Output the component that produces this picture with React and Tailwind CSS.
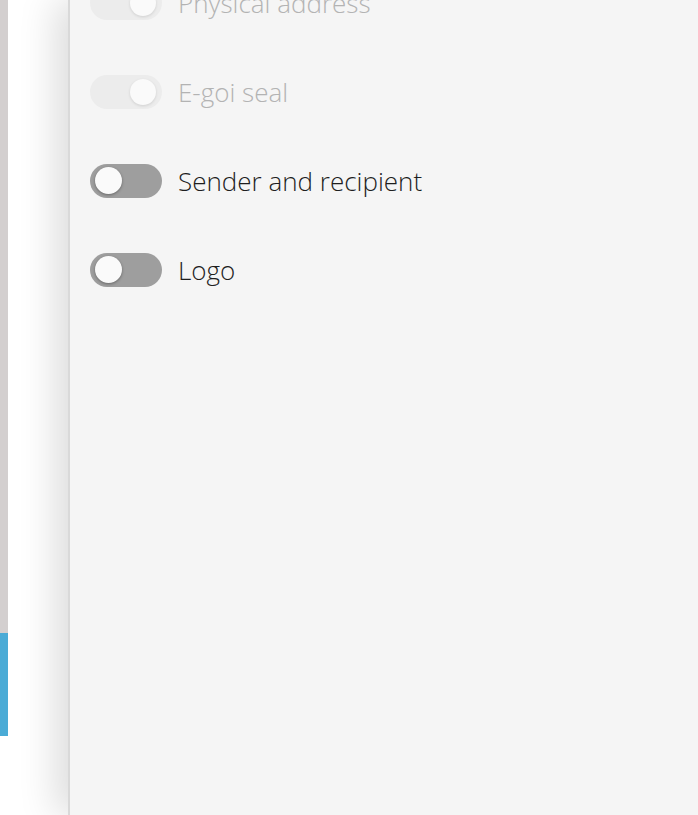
import React from "react";

function Toggle({ disabled }) {
  if (disabled) {
    return (
      <div className="relative w-[72px] h-[34px] rounded-full bg-[#ececec] shrink-0">
        <div className="absolute right-[6px] top-[4px] w-[26px] h-[26px] rounded-full bg-[#fafafa] shadow-[0_1px_3px_rgba(0,0,0,0.12)]" />
      </div>
    );
  }
  return (
    <div className="relative w-[72px] h-[34px] rounded-full bg-[#9e9e9e] shrink-0">
      <div className="absolute left-[5px] top-[3px] w-[27px] h-[27px] rounded-full bg-[#fafafa] shadow-[0_1px_3px_rgba(0,0,0,0.35)]" />
    </div>
  );
}

function Row({ label, disabled }) {
  return (
    <div className="flex items-center h-[34px] gap-[16px]">
      <Toggle disabled={disabled} />
      <span
        className={
          "text-[26px] font-light leading-none whitespace-nowrap " +
          (disabled ? "text-[#b3b3b3]" : "text-[#1e1e1e]")
        }
        style={{ fontFamily: '"Open Sans", "Noto Sans", sans-serif' }}
      >
        {label}
      </span>
    </div>
  );
}

export default function App() {
  return (
    <div className="flex w-[698px] h-[815px] overflow-hidden bg-white">
      <div className="w-[8px] flex flex-col shrink-0">
        <div className="h-[633px] bg-[#d3cfcf]" />
        <div className="h-[103px] bg-[#4aabd6]" />
        <div className="flex-1 bg-white" />
      </div>
      <div className="w-[60px] shrink-0 bg-white" />
      <div className="flex-1 bg-[#f5f5f5] border-l-2 border-[#d9d9d9] shadow-[-12px_0_36px_rgba(0,0,0,0.14)] overflow-hidden">
        <div className="-mt-[14px] pl-[20px] flex flex-col gap-[55px]">
          <Row label="Physical address" disabled />
          <Row label="E-goi seal" disabled />
          <Row label="Sender and recipient" />
          <Row label="Logo" />
        </div>
      </div>
    </div>
  );
}
